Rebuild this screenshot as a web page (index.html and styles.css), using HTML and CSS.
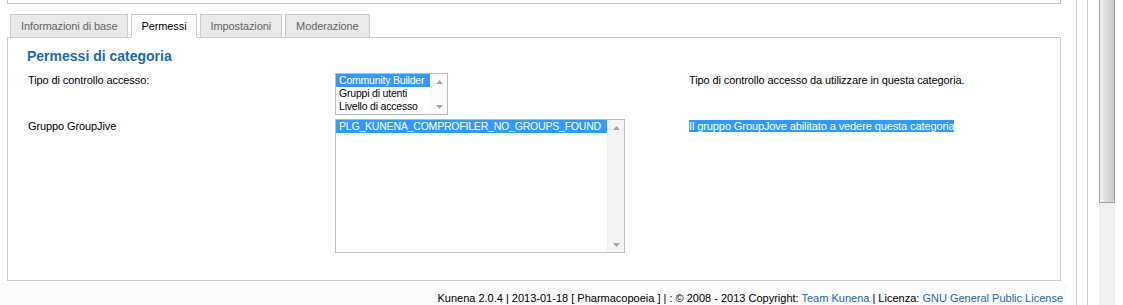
FILE: index.html
```html
<!DOCTYPE html>
<html lang="it">
<head>
    <meta charset="UTF-8">
    <title>Kunena - Permessi di categoria</title>
    <link rel="stylesheet" href="styles.css">
</head>
<body>
<div class="page">
    <div class="main">
        <div class="top-box"></div>

        <ul class="tabs">
            <li class="tab">Informazioni di base</li>
            <li class="tab active">Permessi</li>
            <li class="tab">Impostazioni</li>
            <li class="tab">Moderazione</li>
        </ul>

        <div class="panel">
            <h2 class="panel-title">Permessi di categoria</h2>

            <div class="form-grid">
                <div class="field-label">Tipo di controllo accesso:</div>
                <div class="listbox listbox-small">
                    <ul class="options">
                        <li class="option selected">Community Builder</li>
                        <li class="option">Gruppi di utenti</li>
                        <li class="option">Livello di accesso</li>
                    </ul>
                    <div class="list-scroll">
                        <svg width="7" height="4" viewBox="0 0 7 4"><path d="M0 4 L3.5 0 L7 4 Z" fill="#a6a6a6"/></svg>
                        <svg width="7" height="4" viewBox="0 0 7 4"><path d="M0 0 L3.5 4 L7 0 Z" fill="#a6a6a6"/></svg>
                    </div>
                </div>
                <div class="field-desc">Tipo di controllo accesso da utilizzare in questa categoria.</div>

                <div class="field-label">Gruppo GroupJive</div>
                <div class="listbox listbox-large">
                    <ul class="options">
                        <li class="option selected">PLG_KUNENA_COMPROFILER_NO_GROUPS_FOUND</li>
                    </ul>
                    <div class="list-scroll">
                        <svg width="7" height="4" viewBox="0 0 7 4"><path d="M0 4 L3.5 0 L7 4 Z" fill="#a6a6a6"/></svg>
                        <svg width="7" height="4" viewBox="0 0 7 4"><path d="M0 0 L3.5 4 L7 0 Z" fill="#a6a6a6"/></svg>
                    </div>
                </div>
                <div class="field-desc"><span class="marked">Il gruppo GroupJove abilitato a vedere questa categoria</span></div>
            </div>
        </div>

        <div class="footer">
            Kunena 2.0.4 | 2013-01-18 [ Pharmacopoeia ] | : &copy; 2008 - 2013 Copyright: <a href="#">Team Kunena</a> | Licenza: <a href="#">GNU General Public License</a>
        </div>
    </div>

    <div class="rail-line first"></div>
    <div class="rail-line second"></div>
    <div class="scrollbar">
        <div class="scroll-thumb"></div>
    </div>
</div>
</body>
</html>
```

FILE: styles.css
```css
* {
    margin: 0;
    padding: 0;
    box-sizing: border-box;
}

body {
    font-family: 'Liberation Sans', Arial, sans-serif;
    font-size: 11px;
    letter-spacing: -0.1px;
    color: #000;
    background-color: #fff;
    overflow: hidden;
}

.page {
    display: flex;
    height: 305px;
}

.main {
    width: 1067px;
    display: flex;
    flex-direction: column;
}

/* box sopra le schede, tagliato in alto */
.top-box {
    height: 4px;
    margin: 0 6px 0 7px;
    border: 1px solid #cccccc;
    border-top: none;
}

.tabs {
    list-style: none;
    display: flex;
    gap: 3px;
    margin: 10px 0 0 10px;
}

.tab {
    height: 23px;
    line-height: 22px;
    padding: 0 10px;
    border: 1px solid #cccccc;
    border-bottom: none;
    background-color: #e8e8e8;
    color: #666;
}

.tab.active {
    position: relative;
    height: 24px;
    margin-bottom: -1px;
    padding: 0 9px;
    background-color: #fff;
    color: #000;
}

.panel {
    height: 245px;
    margin: 0 6px 0 7px;
    padding: 10px 20px 0 20px;
    border: 1px solid #cccccc;
}

.panel-title {
    font-size: 14px;
    line-height: 16px;
    font-weight: bold;
    letter-spacing: 0;
    color: #1d6aa8;
    margin: 0 0 9px -1px;
}

.form-grid {
    display: grid;
    grid-template-columns: 307px 354px 1fr;
    row-gap: 4px;
    align-items: start;
}

.field-label,
.field-desc {
    line-height: 14px;
}

.listbox {
    display: flex;
    border: 1px solid #bbbbbb;
    background-color: #fff;
}

.listbox-small {
    width: 113px;
    height: 42px;
}

.listbox-large {
    width: 290px;
    height: 134px;
}

.options {
    list-style: none;
    flex: 1;
    min-width: 0;
}

.option {
    height: 13px;
    line-height: 13px;
    padding-left: 3px;
    font-size: 10.5px;
    letter-spacing: -0.2px;
    white-space: nowrap;
}

.option.selected {
    background-color: #3399ff;
    color: #fff;
}

.list-scroll {
    width: 17px;
    display: flex;
    flex-direction: column;
    justify-content: space-between;
    align-items: center;
    padding: 6px 0 5px 1px;
    background-color: #f4f4f4;
}

.listbox-small .list-scroll {
    background-color: #fbfbfb;
}

.marked {
    background-color: #3399ff;
    color: #fff;
}

.footer {
    margin-top: 2px;
    flex: 1;
    padding: 9px 4px 0 0;
    background-color: #fafafa;
    text-align: right;
    line-height: 13px;
    letter-spacing: 0;
}

.footer a {
    color: #1d6aa8;
    text-decoration: none;
}

.rail-line {
    width: 1px;
    background-color: #cccccc;
}

.rail-line.first {
    margin-left: 9px;
}

.rail-line.second {
    margin-left: 10px;
}

.scrollbar {
    width: 16px;
    margin-left: 11px;
    background-color: #f0f0f0;
}

.scroll-thumb {
    height: 203px;
    border: 1px solid #a0a0a0;
    border-top: none;
    background: linear-gradient(to right, #f2f2f2, #dcdcdc 45%, #c9c9c9);
}
```
